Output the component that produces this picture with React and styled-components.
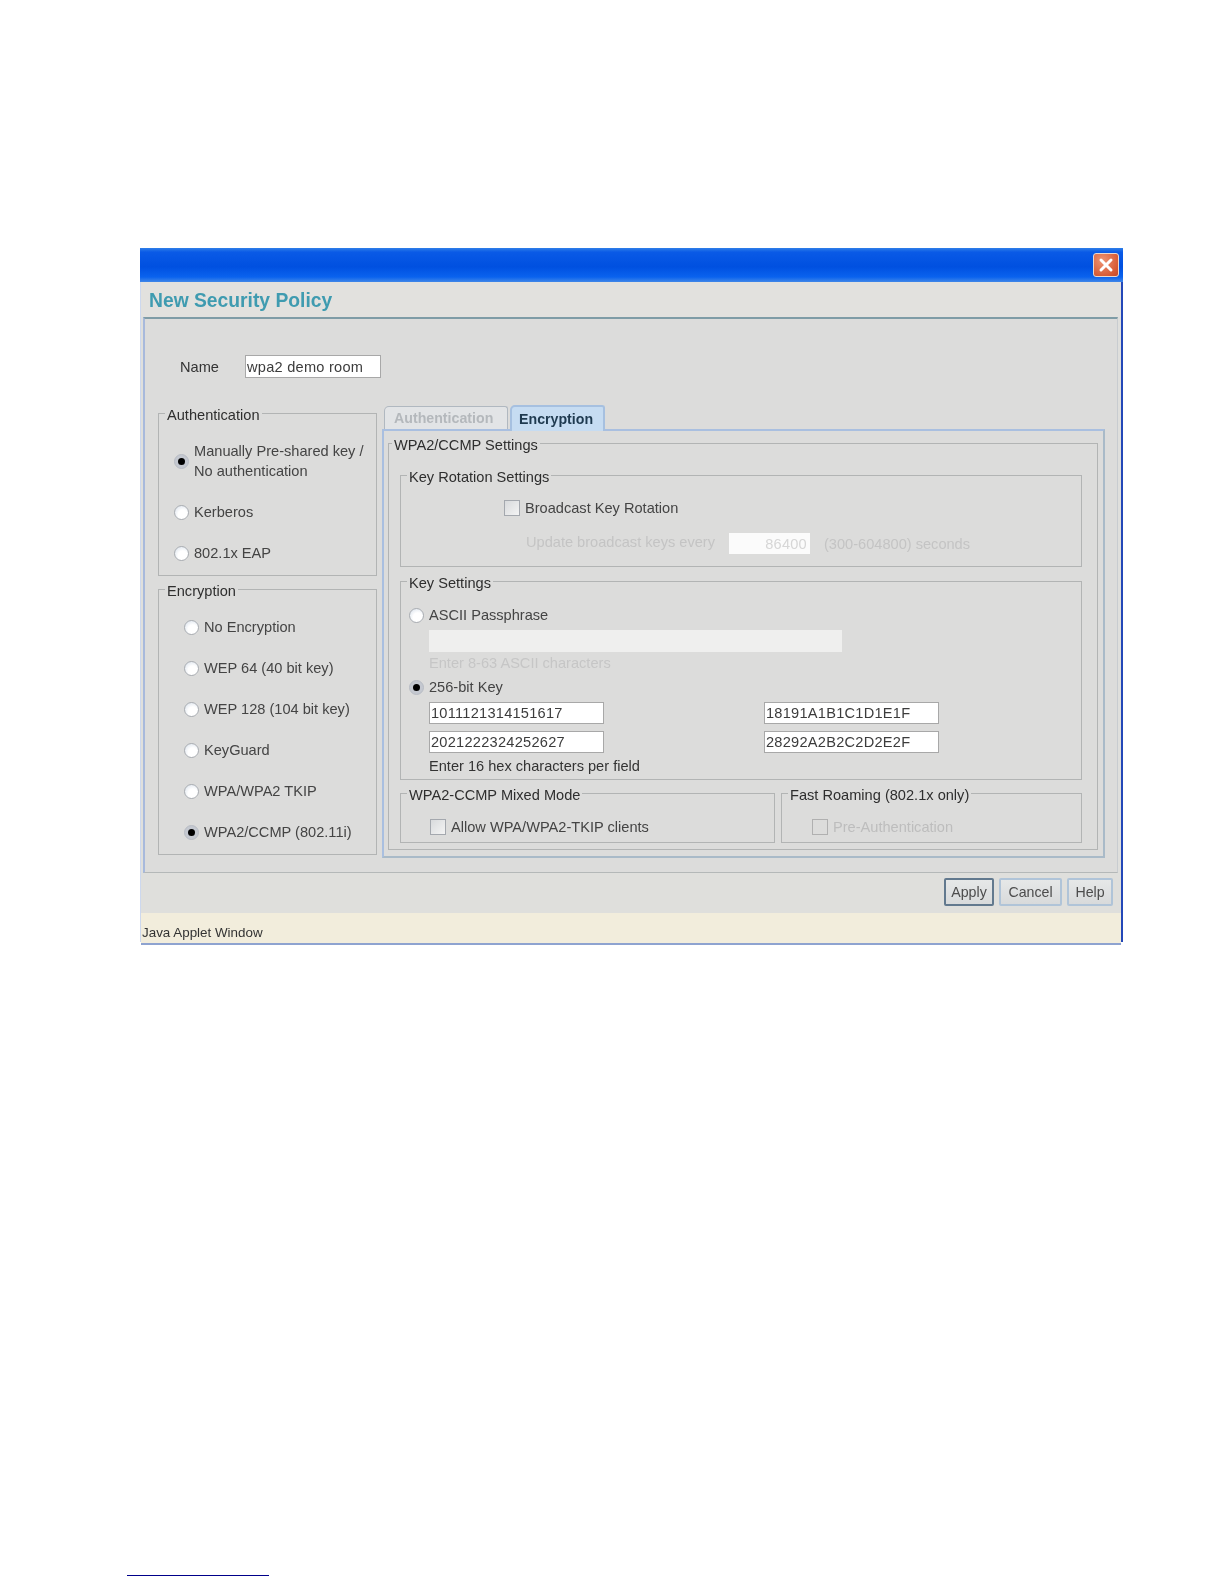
import React from "react";
import styled, { createGlobalStyle } from "styled-components";

const Global = createGlobalStyle`
  html, body {
    margin: 0;
    padding: 0;
    background: #fff;
    font-family: "Liberation Sans", Arial, sans-serif;
  }
`;

const Page = styled.div`
  width: 1224px;
  height: 1584px;
  padding: 248px 0 0 127px;
  box-sizing: border-box;
  overflow: hidden;
`;

const Window = styled.div`
  width: 983px;
  height: 694px;
  margin-left: 13px;
  display: flex;
  flex-direction: column;
  box-sizing: border-box;
  background: #dfdfdc;
  color: #333;
  font-size: 14.6px;
  filter: blur(0.7px);
`;

const TitleBar = styled.div`
  height: 34px;
  flex: none;
  display: flex;
  justify-content: flex-end;
  align-items: center;
  padding-right: 4px;
  box-sizing: border-box;
  background: linear-gradient(#2f7fe8 0, #0a5ae6 12%, #0050e0 55%, #0a62ee 85%, #3f86e8 100%);
`;

const CloseButton = styled.div`
  width: 26px;
  height: 24px;
  border: 1px solid #e8d8d0;
  border-radius: 3px;
  box-sizing: border-box;
  display: flex;
  align-items: center;
  justify-content: center;
  background: radial-gradient(circle at 35% 30%, #ee9474, #d85c36 70%, #c4472a);
`;

const Frame = styled.div`
  flex: 1;
  min-height: 0;
  display: flex;
  flex-direction: column;
  border-left: 1px solid #cdd8ee;
  border-right: 2px solid #2448b8;
`;

const Heading = styled.div`
  height: 35px;
  flex: none;
  box-sizing: border-box;
  padding: 3px 0 0 8px;
  display: flex;
  align-items: center;
  font-size: 19.3px;
  font-weight: bold;
  color: #3f9bb0;
  background: #e2e1de;
`;

const MainPanel = styled.div`
  height: 556px;
  flex: none;
  margin: 0 3px 0 2px;
  box-sizing: border-box;
  padding: 36px 0 0 13px;
  background: #dcdcdb;
  border-top: 2px solid #7f9ca6;
  border-left: 2px solid #a7b9dc;
  border-right: 1px solid #c8ccd0;
  border-bottom: 1px solid #b4b8b8;
`;

const NameRow = styled.div`
  display: flex;
  align-items: center;
  height: 23px;
  margin-left: 22px;
`;

const NameLabel = styled.span`
  width: 65px;
`;

const Field = styled.div`
  box-sizing: border-box;
  width: ${p => p.$w}px;
  height: ${p => p.$h || 22}px;
  padding: 0 1px;
  display: flex;
  align-items: center;
  justify-content: ${p => (p.$right ? "flex-end" : "flex-start")};
  background: ${p => (p.$off ? "#efefee" : "#fff")};
  border: ${p => (p.$off ? "none" : "1px solid #a8a8a8")};
  color: ${p => (p.$off ? "#cfcfcf" : "#3c3c3c")};
  letter-spacing: 0.25px;
`;

const UpdateField = styled(Field)`
  background: #fbfbfb;
  padding-right: 3px;
  color: #d6d6d6;
`;

const Columns = styled.div`
  display: flex;
  gap: 5px;
  margin-top: 27px;
`;

const LeftColumn = styled.div`
  width: 219px;
  display: flex;
  flex-direction: column;
  gap: 5px;
`;

const Group = styled.fieldset`
  margin: 0;
  padding: 0;
  min-width: 0;
  box-sizing: border-box;
  height: ${p => p.$h}px;
  flex: ${p => (p.$grow ? 1 : "none")};
  width: ${p => (p.$w ? `${p.$w}px` : "auto")};
  border: 1px solid #b2b4b4;
`;

const Legend = styled.legend`
  margin-left: ${p => p.$inset ?? 6}px;
  padding: 0 2px;
  height: 16px;
  line-height: 20px;
  color: #2e2e2e;
`;

const RadioList = styled.div`
  display: flex;
  flex-direction: column;
  gap: 21px;
  padding: 20px 0 0 ${p => p.$left}px;
`;

const Option = styled.div`
  display: flex;
  align-items: center;
  gap: ${p => p.$gap ?? 5}px;
  min-height: 20px;
  line-height: 20px;
  color: ${p => (p.$off ? "#bdbdbd" : "#444")};
`;

const Radio = styled.span`
  width: 15px;
  height: 15px;
  flex: none;
  box-sizing: border-box;
  border-radius: 50%;
  border: 1px solid ${p => (p.$on ? "#b8bcc4" : "#a9adb2")};
  background: ${p => (p.$on
    ? "#c4c8d0"
    : "radial-gradient(circle at 60% 65%, #fff 40%, #d4dde8 100%)")};
  display: flex;
  align-items: center;
  justify-content: center;
  &::after {
    content: "";
    display: ${p => (p.$on ? "block" : "none")};
    width: 7px;
    height: 7px;
    border-radius: 50%;
    background: #000;
  }
`;

const Check = styled.span`
  width: 16px;
  height: 16px;
  flex: none;
  box-sizing: border-box;
  border: 1px solid ${p => (p.$off ? "#b0b0b0" : "#a4a8ae")};
  background: ${p => (p.$off ? "transparent" : "linear-gradient(135deg, #d8dadc, #f4f4f4)")};
`;

const TabColumn = styled.div`
  width: 723px;
  display: flex;
  flex-direction: column;
`;

const TabRow = styled.div`
  height: 24px;
  display: flex;
  gap: 2px;
  padding-left: 2px;
  font-size: 14.2px;
  font-weight: bold;
`;

const Tab = styled.div`
  box-sizing: border-box;
  width: 124px;
  height: 23px;
  margin-top: 1px;
  padding: 0 0 1px 9px;
  display: flex;
  align-items: center;
  border-radius: 5px 3px 0 0;
  border: 1px solid #b0b8c0;
  border-bottom: none;
  background: #e2e4e6;
  color: #b4b8bc;
`;

const ActiveTab = styled(Tab)`
  width: 95px;
  height: 26px;
  margin-top: 0;
  padding: 0 0 0 7px;
  position: relative;
  border: 2px solid #a6c0e0;
  border-bottom: none;
  background: #c6dcf2;
  color: #1f3a50;
`;

const TabPanel = styled.div`
  height: 429px;
  box-sizing: border-box;
  padding: 4px 5px 6px 4px;
  border: 2px solid #a9bfe0;
  border-right-color: #a9bac8;
  border-bottom-color: #a9bac8;
`;

const GroupStack = styled.div`
  display: flex;
  flex-direction: column;
  padding: 16px 15px 0 11px;
  gap: 6px;
`;

const RotationBody = styled.div`
  padding: 15px 0 0 103px;
`;

const UpdateRow = styled.div`
  display: flex;
  align-items: center;
  margin: 15px 0 0 22px;
  color: #c4c4c4;
`;

const UpdateLabel = styled.span`
  width: 203px;
  margin-bottom: 4px;
`;

const UpdateUnit = styled.span`
  margin-left: 14px;
`;

const KeyBody = styled.div`
  display: flex;
  flex-direction: column;
  align-items: flex-start;
  padding: 16px 0 0 8px;
`;

const PassField = styled(Field)`
  margin: 5px 0 0 20px;
`;

const Hint = styled.div`
  margin: ${p => p.$top}px 0 0 20px;
  height: 16px;
  line-height: 16px;
  color: ${p => (p.$off ? "#c6c6c6" : "#333")};
`;

const KeyOption = styled(Option)`
  margin-top: 6px;
`;

const KeyGrid = styled.div`
  display: grid;
  grid-template-columns: 175px 176px;
  column-gap: 160px;
  row-gap: 7px;
  margin: 5px 0 0 20px;
`;

const BottomRow = styled.div`
  display: flex;
  gap: 6px;
  margin-top: -1px;
`;

const CheckBody = styled.div`
  padding: 16px 0 0 ${p => p.$left}px;
`;

const ButtonBar = styled.div`
  height: 40px;
  flex: none;
  box-sizing: border-box;
  padding: 5px 8px 0 0;
  display: flex;
  justify-content: flex-end;
  gap: 5px;
  font-size: 14.2px;
`;

const Button = styled.div`
  box-sizing: border-box;
  width: ${p => p.$w}px;
  height: 28px;
  display: flex;
  align-items: center;
  justify-content: center;
  border-radius: 2px;
  border: ${p => (p.$main ? "2px solid #62798e" : "2px solid #b0c4d8")};
  background: linear-gradient(#e6e8e8, #d8dadb);
  color: #4c4c4c;
`;

const StatusBar = styled.div`
  flex: 1;
  padding: 10px 0 0 1px;
  box-sizing: border-box;
  font-size: 13.4px;
  line-height: 20px;
  background: #f2eddc;
  color: #333;
  border-bottom: 2px solid #8ea3d0;
`;

const FootnoteRule = styled.div`
  width: 142px;
  height: 1px;
  margin-top: 633px;
  background: #00008a;
`;

const authOptions = [
  { label: <>Manually Pre-shared key /<br />No authentication</>, on: true },
  { label: "Kerberos" },
  { label: "802.1x EAP" },
];

const encOptions = [
  { label: "No Encryption" },
  { label: "WEP 64 (40 bit key)" },
  { label: "WEP 128 (104 bit key)" },
  { label: "KeyGuard" },
  { label: "WPA/WPA2 TKIP" },
  { label: "WPA2/CCMP (802.11i)", on: true },
];

const keys = ["1011121314151617", "18191A1B1C1D1E1F", "2021222324252627", "28292A2B2C2D2E2F"];

const RadioGroup = ({ title, options, left, h }) => (
  <Group $h={h}>
    <Legend>{title}</Legend>
    <RadioList $left={left}>
      {options.map((o, i) => (
        <Option key={i}>
          <Radio $on={o.on} />
          <span>{o.label}</span>
        </Option>
      ))}
    </RadioList>
  </Group>
);

export default function App() {
  return (
    <Page>
      <Global />
      <Window>
        <TitleBar>
          <CloseButton>
            <svg width="16" height="16" viewBox="0 0 16 16">
              <path d="M3 3 L13 13 M13 3 L3 13" stroke="#fff" strokeWidth="3" strokeLinecap="round" />
            </svg>
          </CloseButton>
        </TitleBar>
        <Frame>
          <Heading>New Security Policy</Heading>
          <MainPanel>
            <NameRow>
              <NameLabel>Name</NameLabel>
              <Field $w={136} $h={23}>wpa2 demo room</Field>
            </NameRow>
            <Columns>
              <LeftColumn>
                <RadioGroup title="Authentication" options={authOptions} left={15} h={171} />
                <RadioGroup title="Encryption" options={encOptions} left={25} h={274} />
              </LeftColumn>
              <TabColumn>
                <TabRow>
                  <Tab>Authentication</Tab>
                  <ActiveTab>Encryption</ActiveTab>
                </TabRow>
                <TabPanel>
                  <Group $h={415}>
                    <Legend $inset={3}>WPA2/CCMP Settings</Legend>
                    <GroupStack>
                      <Group $h={100}>
                        <Legend>Key Rotation Settings</Legend>
                        <RotationBody>
                          <Option>
                            <Check />
                            <span>Broadcast Key Rotation</span>
                          </Option>
                          <UpdateRow>
                            <UpdateLabel>Update broadcast keys every</UpdateLabel>
                            <UpdateField $w={81} $h={21} $off $right>86400</UpdateField>
                            <UpdateUnit>(300-604800) seconds</UpdateUnit>
                          </UpdateRow>
                        </RotationBody>
                      </Group>
                      <Group $h={207}>
                        <Legend>Key Settings</Legend>
                        <KeyBody>
                          <Option>
                            <Radio />
                            <span>ASCII Passphrase</span>
                          </Option>
                          <PassField $w={413} $off />
                          <Hint $top={3} $off>Enter 8-63 ASCII characters</Hint>
                          <KeyOption>
                            <Radio $on />
                            <span>256-bit Key</span>
                          </KeyOption>
                          <KeyGrid>
                            {keys.map(k => (
                              <Field key={k} $w={175}>{k}</Field>
                            ))}
                          </KeyGrid>
                          <Hint $top={5}>Enter 16 hex characters per field</Hint>
                        </KeyBody>
                      </Group>
                      <BottomRow>
                        <Group $h={58} $w={375}>
                          <Legend>WPA2-CCMP Mixed Mode</Legend>
                          <CheckBody $left={29}>
                            <Option>
                              <Check />
                              <span>Allow WPA/WPA2-TKIP clients</span>
                            </Option>
                          </CheckBody>
                        </Group>
                        <Group $h={58} $grow>
                          <Legend>Fast Roaming (802.1x only)</Legend>
                          <CheckBody $left={30}>
                            <Option $off>
                              <Check $off />
                              <span>Pre-Authentication</span>
                            </Option>
                          </CheckBody>
                        </Group>
                      </BottomRow>
                    </GroupStack>
                  </Group>
                </TabPanel>
              </TabColumn>
            </Columns>
          </MainPanel>
          <ButtonBar>
            <Button $w={50} $main>Apply</Button>
            <Button $w={63}>Cancel</Button>
            <Button $w={46}>Help</Button>
          </ButtonBar>
          <StatusBar>Java Applet Window</StatusBar>
        </Frame>
      </Window>
      <FootnoteRule />
    </Page>
  );
}
